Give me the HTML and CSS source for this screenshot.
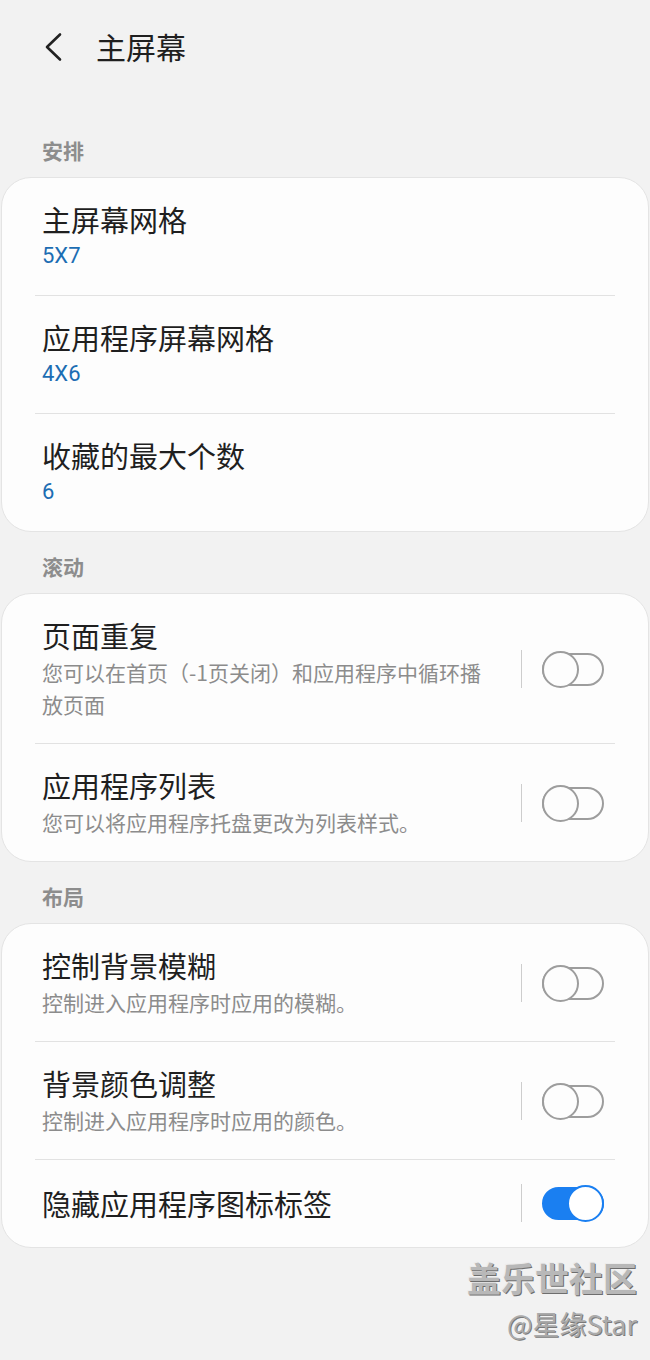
FILE: index.html
```html
<!DOCTYPE html>
<html lang="zh-CN">
<head>
<meta charset="utf-8">
<title>主屏幕</title>
<link rel="stylesheet" href="styles.css">
</head>
<body>
<header class="header">
  <svg class="back" width="20" height="30" viewBox="0 0 20 30"><path d="M17 2.5 L4 15 L17 27.5" fill="none" stroke="#222" stroke-width="2.6" stroke-linecap="round" stroke-linejoin="round"/></svg>
  <h1 class="title">主屏幕</h1>
</header>

<div class="label first">安排</div>
<section class="card">
  <div class="row">
    <div class="text">
      <div class="row-title">主屏幕网格</div>
      <div class="row-value">5X7</div>
    </div>
  </div>
  <div class="row">
    <div class="text">
      <div class="row-title">应用程序屏幕网格</div>
      <div class="row-value">4X6</div>
    </div>
  </div>
  <div class="row">
    <div class="text">
      <div class="row-title">收藏的最大个数</div>
      <div class="row-value">6</div>
    </div>
  </div>
</section>

<div class="label">滚动</div>
<section class="card">
  <div class="row">
    <div class="text">
      <div class="row-title">页面重复</div>
      <div class="row-desc">您可以在首页（-1页关闭）和应用程序中循环播放页面</div>
    </div>
    <div class="vline"></div>
    <div class="toggle"><span class="thumb"></span></div>
  </div>
  <div class="row">
    <div class="text">
      <div class="row-title">应用程序列表</div>
      <div class="row-desc">您可以将应用程序托盘更改为列表样式。</div>
    </div>
    <div class="vline"></div>
    <div class="toggle"><span class="thumb"></span></div>
  </div>
</section>

<div class="label">布局</div>
<section class="card">
  <div class="row">
    <div class="text">
      <div class="row-title">控制背景模糊</div>
      <div class="row-desc">控制进入应用程序时应用的模糊。</div>
    </div>
    <div class="vline"></div>
    <div class="toggle"><span class="thumb"></span></div>
  </div>
  <div class="row">
    <div class="text">
      <div class="row-title">背景颜色调整</div>
      <div class="row-desc">控制进入应用程序时应用的颜色。</div>
    </div>
    <div class="vline"></div>
    <div class="toggle"><span class="thumb"></span></div>
  </div>
  <div class="row single">
    <div class="text">
      <div class="row-title">隐藏应用程序图标标签</div>
    </div>
    <div class="vline"></div>
    <div class="toggle on"><span class="thumb"></span></div>
  </div>
</section>

<div class="watermark">
  <div class="wm-big">盖乐世社区</div>
  <div class="wm-small">@星缘Star</div>
</div>
</body>
</html>
```

FILE: styles.css
```css
html, body {
  margin: 0;
  padding: 0;
}
body {
  background: #f2f2f2;
  font-family: "Noto Sans CJK SC", "Noto Sans", sans-serif;
  color: #1f1f1f;
  width: 650px;
  min-height: 1360px;
}
.header {
  height: 96px;
  display: flex;
  align-items: center;
}
.back {
  margin-left: 43px;
  margin-top: -2px;
  flex: none;
}
.title {
  margin: -4px 0 0 33px;
  font-size: 30px;
  font-weight: 400;
  line-height: 40px;
  color: #1f1f1f;
}
.label {
  padding: 19px 42px 12px;
  font-size: 21px;
  line-height: 30px;
  font-weight: 700;
  color: #8d8d8d;
}
.label.first {
  padding-top: 39px;
}
.card {
  margin: 0 1px;
  background: #fdfdfd;
  border: 1px solid #e4e4e4;
  border-radius: 30px;
}
.row {
  margin: 0 33px;
  padding: 24px 11px 23px 7px;
  display: flex;
  align-items: center;
  border-top: 1px solid #e2e2e2;
}
.row:first-child {
  border-top: none;
}
.row.single {
  padding-bottom: 25px;
}
.text {
  flex: 1;
  min-width: 0;
  padding-right: 20px;
}
.row-title {
  font-size: 29px;
  line-height: 34px;
  color: #1f1f1f;
}
.row-value {
  margin-top: 4px;
  font-family: Roboto, "Noto Sans CJK SC", sans-serif;
  font-size: 22px;
  line-height: 32px;
  color: #1c6db3;
}
.row-desc {
  margin-top: 4px;
  font-size: 21px;
  line-height: 32px;
  color: #8c8c8c;
}
.vline {
  flex: none;
  width: 1px;
  height: 38px;
  background: #cdcdcd;
  margin-right: 20px;
}
.toggle {
  flex: none;
  position: relative;
  width: 62px;
  height: 33px;
  box-sizing: border-box;
  border: 2px solid #9d9d9d;
  border-radius: 17px;
}
.thumb {
  position: absolute;
  left: -2px;
  top: -4px;
  width: 37px;
  height: 37px;
  box-sizing: border-box;
  border: 2px solid #9d9d9d;
  border-radius: 50%;
  background: #fdfdfd;
}
.toggle.on {
  background: #1a7ff1;
  border-color: #1a7ff1;
}
.toggle.on .thumb {
  left: auto;
  right: -2px;
  border-color: #1a7ff1;
  background: #ffffff;
}
.watermark {
  margin-top: 8px;
  padding-right: 13px;
  text-align: right;
}
.wm-big {
  font-size: 34px;
  line-height: 44px;
  font-weight: 700;
  color: #b8b8b8;
  text-shadow: 1px 1px 0 #6e6e6e, -1px -1px 0 #ececec;
}
.wm-small {
  margin-top: 4px;
  font-size: 27px;
  line-height: 40px;
  color: #ababab;
  text-shadow: 1px 1px 0 #7a7a7a;
}
```
